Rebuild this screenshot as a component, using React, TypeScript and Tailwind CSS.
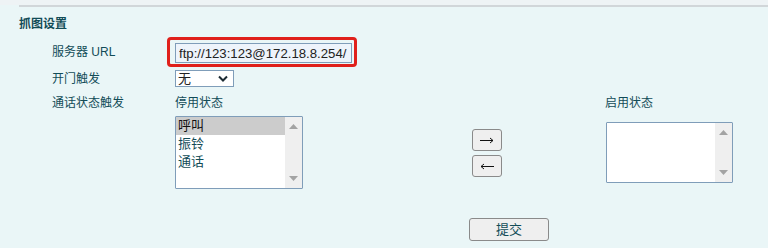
import { useState } from 'react';

const textFont = "font-['Liberation_Sans','Noto_Sans_CJK_SC',sans-serif]";

function ScrollArrows() {
  return (
    <div className="w-[17px] bg-[#efefef] flex flex-col items-center justify-between py-[7px]">
      <svg width="9" height="5" viewBox="0 0 9 5">
        <path d="M0 5 L4.5 0 L9 5 Z" fill="#a3a3a3" />
      </svg>
      <svg width="9" height="5" viewBox="0 0 9 5">
        <path d="M0 0 L4.5 5 L9 0 Z" fill="#a3a3a3" />
      </svg>
    </div>
  );
}

function ListBox({ items, selected, className }: { items: string[]; selected: number; className: string }) {
  return (
    <div className={`flex border border-[#7f9db9] bg-white rounded-[1px] ${className}`}>
      <div className="flex-1 flex flex-col">
        {items.map((item, i) => (
          <div
            key={item}
            className={`h-[18px] leading-[18px] pl-[2px] text-[13px] ${
              i === selected ? 'bg-[#cccccc] text-[#111]' : 'text-[#124c57]'
            }`}
          >
            {item}
          </div>
        ))}
      </div>
      <ScrollArrows />
    </div>
  );
}

export default function App() {
  const [url, setUrl] = useState('ftp://123:123@172.18.8.254/');

  return (
    <div className={`w-[768px] h-[248px] bg-[#eaf6f7] text-[12px] text-[#124c57] overflow-hidden ${textFont}`}>
      {/* Top edge */}
      <div className="h-[5px] bg-[#eef3f5]" />
      <div className="ml-[19px] h-[2px] bg-[#d1d6d9]" />

      <div className="pl-[19px] pt-[9px] leading-[16px] font-bold text-[12px]">抓图设置</div>

      {/* Server URL */}
      <div className="flex items-center h-[30px] mt-[5px] pl-[52px]">
        <div className="w-[115px]">服务器 URL</div>
        <div className="border-[3px] border-[#e0201b] rounded-[4px] pl-[5px] pr-[2px] pt-[3px] pb-[1px]">
          <input
            value={url}
            onChange={(e) => setUrl(e.target.value)}
            className={`block w-[177px] h-[20px] border border-[#7f9db9] bg-[#eef4fb] pl-[3px] pr-0 text-[13.2px] text-[#222] outline-none ${textFont}`}
          />
        </div>
      </div>

      {/* Door trigger */}
      <div className="flex items-center h-[17px] mt-[3px] pl-[52px]">
        <div className="w-[123px]">开门触发</div>
        <div className="w-[59px] h-[17px] border border-[#7f9db9] bg-white flex items-center justify-between pl-[2px] pr-[5px] text-[13px] text-[#222]">
          <span>无</span>
          <svg width="10" height="7" viewBox="0 0 10 7">
            <path d="M1 1.5 L5 5.5 L9 1.5" stroke="#1c2b33" strokeWidth="2" fill="none" />
          </svg>
        </div>
      </div>

      {/* Call state trigger */}
      <div className="flex mt-[8px] pl-[52px]">
        <div className="w-[123px] leading-[16px]">通话状态触发</div>
        <div className="w-[297px] flex flex-col">
          <div className="leading-[16px]">停用状态</div>
          <ListBox items={['呼叫', '振铃', '通话']} selected={0} className="mt-[5px] w-[128px] h-[73px]" />
        </div>
        <div className="w-[133px] flex flex-col gap-[4px] pt-[34px]">
          <button className="w-[30px] h-[22px] border border-[#8a8a8a] rounded-[3px] bg-[#efefef] flex items-center justify-center">
            <svg width="14" height="7" viewBox="0 0 14 7">
              <path d="M0 3.5 H13 M10 1 L13 3.5 L10 6" stroke="#111" strokeWidth="1" fill="none" />
            </svg>
          </button>
          <button className="w-[30px] h-[22px] border border-[#8a8a8a] rounded-[3px] bg-[#efefef] flex items-center justify-center">
            <svg width="14" height="7" viewBox="0 0 14 7">
              <path d="M1 3.5 H14 M4 1 L1 3.5 L4 6" stroke="#111" strokeWidth="1" fill="none" />
            </svg>
          </button>
        </div>
        <div className="flex flex-col">
          <div className="leading-[16px]">启用状态</div>
          <ListBox items={[]} selected={-1} className="mt-[11px] ml-px w-[127px] h-[61px]" />
        </div>
      </div>

      <div className="pl-[469px] mt-[29px]">
        <button className="w-[80px] h-[23px] border border-[#8a8a8a] rounded-[3px] bg-[#efefef] text-[13px] text-[#124c57]">
          提交
        </button>
      </div>
    </div>
  );
}
